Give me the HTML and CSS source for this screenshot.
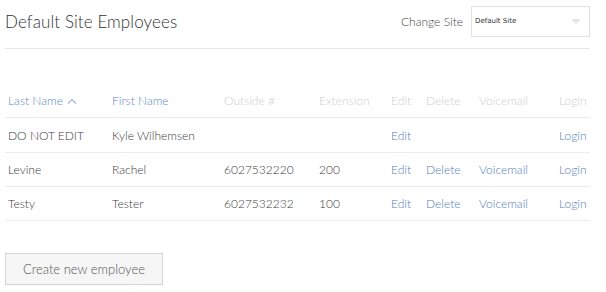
FILE: index.html
```html
<!DOCTYPE html>
<html>
<head>
<meta charset="utf-8">
<link rel="stylesheet" href="styles.css">
</head>
<body>
<div class="page">
  <header class="top">
    <h1 class="title">Default Site Employees</h1>
    <div class="site">
      <span class="site-label">Change Site</span>
      <div class="select">
        <span class="select-text">Default Site</span>
        <span class="caret"></span>
      </div>
    </div>
  </header>
  <table class="grid">
    <colgroup>
      <col class="c1"><col class="c2"><col class="c3"><col class="c4"><col class="c5"><col class="c6"><col class="c7"><col class="c8">
    </colgroup>
    <thead>
      <tr>
        <th class="sort">Last Name <svg class="arrow" width="10" height="6" viewBox="0 0 10 6"><path d="M1 5.5 L5 1.5 L9 5.5" fill="none" stroke="#9fb4d4" stroke-width="1.1"/></svg></th>
        <th class="sort">First Name</th>
        <th>Outside #</th>
        <th>Extension</th>
        <th>Edit</th>
        <th>Delete</th>
        <th>Voicemail</th>
        <th class="right">Login</th>
      </tr>
    </thead>
    <tbody>
      <tr>
        <td>DO NOT EDIT</td><td>Kyle Wilhemsen</td><td></td><td></td>
        <td><a class="link">Edit</a></td><td></td><td></td><td class="right"><a class="link">Login</a></td>
      </tr>
      <tr>
        <td>Levine</td><td>Rachel</td><td>6027532220</td><td>200</td>
        <td><a class="link">Edit</a></td><td><a class="link">Delete</a></td><td><a class="link">Voicemail</a></td><td class="right"><a class="link">Login</a></td>
      </tr>
      <tr>
        <td>Testy</td><td>Tester</td><td>6027532232</td><td>100</td>
        <td><a class="link">Edit</a></td><td><a class="link">Delete</a></td><td><a class="link">Voicemail</a></td><td class="right"><a class="link">Login</a></td>
      </tr>
    </tbody>
  </table>
  <button class="btn">Create new employee</button>
</div>
</body>
</html>
```
FILE: styles.css
```css
html, body { margin: 0; padding: 0; background: #fff; }
body { font-family: Lato, "Open Sans", sans-serif; color: #3a3a3a; }
.page { padding: 0 16px 0 5px; }
.top {
  display: flex; align-items: center; justify-content: space-between;
  height: 48px; border-bottom: 1px solid #e6e6e6;
}
.title { margin: 0; font-size: 17px; font-weight: 300; color: #333; letter-spacing: 0.1px; position: relative; top: -3px; }
.site { display: flex; align-items: center; gap: 8px; position: relative; top: -3px; }
.site-label { font-size: 12px; font-weight: 300; color: #444; }
.select {
  width: 117px; height: 29px; border: 1px solid #e2e2e2; box-sizing: content-box;
  display: flex; align-items: center; justify-content: space-between;
}
.select-text { font-family: "DejaVu Sans", Verdana, sans-serif; font-size: 7px; color: #333; padding-left: 3px; }
.caret { width: 0; height: 0; border-left: 5px solid transparent; border-right: 5px solid transparent; border-top: 5px solid #e4e4e4; margin-right: 8px; }
.grid { width: 585px; border-collapse: collapse; table-layout: fixed; margin-top: 34px; font-size: 12px; font-weight: 300; }
.c1 { width: 104px; } .c2 { width: 112px; } .c3 { width: 95px; } .c4 { width: 72px; }
.c5 { width: 35px; } .c6 { width: 53px; } .c7 { width: 80px; } .c8 { width: 34px; }
.grid th, .grid td { text-align: left; padding: 0 3px; height: 33px; border-bottom: 1px solid #ececec; white-space: nowrap; }
.grid th { height: 34px; font-weight: 300; color: #cfcfcf; }
.grid tbody tr:first-child td { height: 34px; }
.grid th.sort { color: #5d8ac4; }
.grid .right { text-align: right; padding-right: 4px; }
.arrow { vertical-align: 1px; margin-left: 1px; }
.grid td { color: #3c3c3c; }
.link { color: #5580bd; text-decoration: none; }
.btn {
  margin-top: 32px; width: 158px; height: 32px; background: #f6f6f6; border: 1px solid #d4d4d4;
  font-family: Lato, sans-serif; font-weight: 300; font-size: 13px; color: #555; border-radius: 0; padding: 0;
}
```
